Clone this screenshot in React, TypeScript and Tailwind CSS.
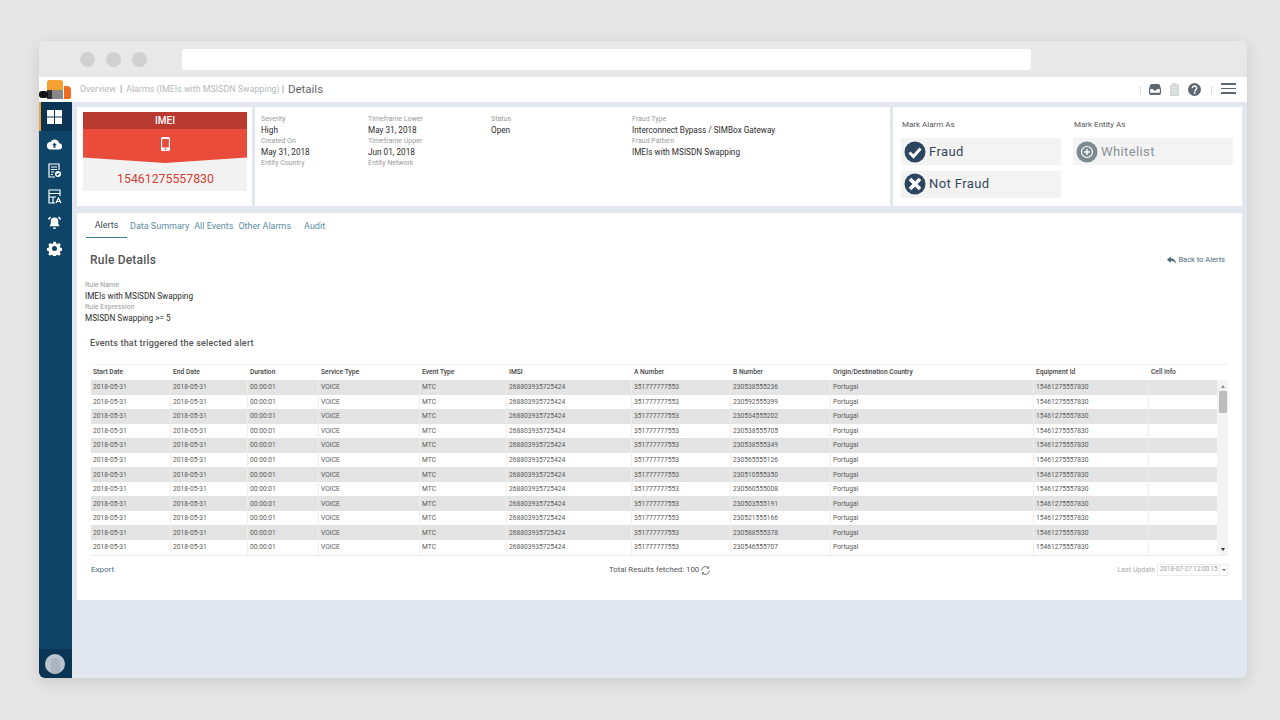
const font = { fontFamily: 'Roboto, "Noto Sans", sans-serif' };

const bNumbers = [
  "230538555236",
  "230592555399",
  "230534555202",
  "230538555705",
  "230538555349",
  "230565555126",
  "230510555350",
  "230560555008",
  "230503555191",
  "230521555166",
  "230588555378",
  "230546555707",
];

const headers = [
  "Start Date",
  "End Date",
  "Duration",
  "Service Type",
  "Event Type",
  "IMSI",
  "A Number",
  "B Number",
  "Origin/Destination Country",
  "Equipment Id",
  "Cell Info",
];

const colWidths = "grid-cols-[80px_77px_71px_101px_87px_125px_99px_100px_203px_115px_69px_11px]";

function Label({ children }: { children: string }) {
  return <div className="text-[7px] leading-[9px] text-[#9a9a9a]">{children}</div>;
}

function Value({ children }: { children: string }) {
  return <div className="text-[8.2px] leading-[12px] text-[#2b2b2b]">{children}</div>;
}

function Field({ label, value }: { label: string; value?: string }) {
  return (
    <div className="h-[22px]">
      <Label>{label}</Label>
      {value && <Value>{value}</Value>}
    </div>
  );
}

function Sidebar() {
  return (
    <div className="flex w-[33px] flex-col rounded-bl-md bg-[#0e4467]">
      <div className="flex h-[29px] items-center justify-center border-l-2 border-[#f2a33a] bg-[#0b3554] pr-[4px] pt-[1px]">
        <svg width="15" height="15" viewBox="0 0 15 15" fill="#fff">
          <rect x="0" y="0" width="7" height="6.5" />
          <rect x="8" y="0" width="7" height="6.5" />
          <rect x="0" y="7.5" width="7" height="6.5" />
          <rect x="8" y="7.5" width="7" height="6.5" />
        </svg>
      </div>
      <div className="flex flex-col items-center gap-[11px] pr-[2px] pt-[6px]">
        <svg width="15" height="15" viewBox="0 0 24 24" fill="#fff">
          <path d="M19.4 10a7.5 7.5 0 0 0-14-2A6 6 0 0 0 6 20h13a5 5 0 0 0 .4-10zM13.5 13v4h-3v-4H8l4-4 4 4z" />
        </svg>
        <svg width="15" height="15" viewBox="0 0 15 15" fill="none" stroke="#fff" strokeWidth="1.2">
          <path d="M8 14H2V1h10v6" />
          <path d="M4 4h6M4 6.5h6M4 9h3M4 11.5h2" />
          <circle cx="11" cy="11" r="3" fill="#fff" stroke="none" />
          <path d="M9.6 11l1 1 1.8-1.8" stroke="#0e4467" />
        </svg>
        <svg width="15" height="15" viewBox="0 0 15 15" fill="none" stroke="#fff" strokeWidth="1.2">
          <path d="M8 14H2V1h11v6" />
          <path d="M2 4.5h11M2 8h7M6 8v6" />
          <path d="M9 14l2.5-5 2.5 5M10 12.5h3" />
        </svg>
        <svg width="15" height="15" viewBox="0 0 24 24" fill="#fff">
          <path d="M12 4a6 6 0 0 0-6 6v4l-2 4h16l-2-4v-4a6 6 0 0 0-6-6zM9.5 20a2.5 2.5 0 0 0 5 0z" />
          <path d="M5 2.5L1.5 6 3 8 6.5 4.5zM19 2.5L22.5 6 21 8 17.5 4.5z" />
        </svg>
        <svg width="15" height="15" viewBox="0 0 24 24" fill="#fff" fillRule="evenodd">
          <path d="M10 1h4l.6 3 2.2.9 2.6-1.7 2.8 2.8-1.7 2.6.9 2.2 3 .6v4l-3 .6-.9 2.2 1.7 2.6-2.8 2.8-2.6-1.7-2.2.9-.6 3h-4l-.6-3-2.2-.9-2.6 1.7-2.8-2.8 1.7-2.6-.9-2.2-3-.6v-4l3-.6.9-2.2L2.2 6l2.8-2.8 2.6 1.7 2.2-.9zM12 8a4 4 0 1 0 0 8 4 4 0 0 0 0-8z" />
        </svg>
      </div>
      <div className="mt-auto flex h-[29px] items-center justify-center rounded-bl-md bg-[#0b3554] pr-[1px]">
        <div className="flex h-5 w-5 items-end justify-center overflow-hidden rounded-full bg-[#b9c5cd]">
          <div className="h-4 w-[9px] rounded-t-full bg-[#a9b6bf]" />
        </div>
      </div>
    </div>
  );
}

function Header() {
  return (
    <div className="flex h-[25px] items-center bg-white pr-[11px]">
      <svg width="33" height="25" viewBox="0 0 33 25" className="shrink-0">
        <rect x="8" y="3" width="16" height="11" rx="2.5" fill="#f5a030" />
        <rect x="8" y="13" width="5" height="9" fill="#333" />
        <rect x="13" y="13" width="11" height="9" fill="#888" />
        <rect x="0" y="14" width="9" height="7" rx="3" fill="#111" />
        <path d="M25 9h3a4 4 0 0 1 4 4v7a2 2 0 0 1-2 2h-5z" fill="#ef6c24" />
      </svg>
      <div className="ml-[8px] flex items-center whitespace-nowrap text-[8.9px] text-[#b4b8bc]">
        <span>Overview</span>
        <span className="mx-[4px] text-[#777]">|</span>
        <span>Alarms (IMEIs with MSISDN Swapping)</span>
        <span className="ml-[2px] mr-[4px] text-[#777]">|</span>
        <span className="text-[11.5px] text-[#666]">Details</span>
      </div>
      <div className="ml-auto flex items-center">
        <div className="mr-[8px] h-[8px] w-px bg-[#ddd]" />
        <svg width="12" height="11" viewBox="0 0 12 11">
          <path d="M3 0h6a2 2 0 0 1 2 1.5L12 5v4a2 2 0 0 1-2 2H2a2 2 0 0 1-2-2V5l1-3.5A2 2 0 0 1 3 0z" fill="#5d6770" />
          <path d="M1.2 5h2.6l1 1.5h2.4l1-1.5h2.6v3.8H1.2z" fill="#fff" />
        </svg>
        <svg width="9" height="13" viewBox="0 0 9 13" className="ml-[9px]">
          <path d="M0 1.5h2.5V0h4v1.5H9V13H0z" fill="#d3d7d7" />
          <path d="M1.5 4.5h6M1.5 6.5h6M1.5 8.5h6M1.5 10.5h6" stroke="#eef0f0" strokeWidth="0.7" />
        </svg>
        <svg width="13" height="13" viewBox="0 0 24 24" className="ml-[9px]">
          <circle cx="12" cy="12" r="12" fill="#5d6770" />
          <path d="M8 9.5a4 4 0 1 1 6.5 3c-1.5 1-2 1.5-2 3" fill="none" stroke="#fff" strokeWidth="2.8" />
          <rect x="10.8" y="17" width="3" height="3" fill="#fff" />
        </svg>
        <div className="ml-[10px] mr-[9px] h-[8px] w-px bg-[#ddd]" />
        <div className="mb-[2px] flex flex-col gap-[3px]">
          <div className="h-[1.5px] w-[15px] bg-[#5d6770]" />
          <div className="h-[1.5px] w-[15px] bg-[#5d6770]" />
          <div className="h-[1.5px] w-[15px] bg-[#5d6770]" />
        </div>
      </div>
    </div>
  );
}

function ImeiCard() {
  return (
    <div className="w-[175px] bg-white pl-[6px] pt-[5px]">
      <div className="relative h-[79px] w-[164px] bg-[#f2f2f2]">
        <div className="flex h-[17px] items-center justify-center bg-[#b93a2f] text-[10px] font-medium text-white">IMEI</div>
        <div
          className="flex h-[34px] items-start justify-center bg-[#e94c3b] pt-[8px]"
          style={{ clipPath: "polygon(0 0, 100% 0, 100% 84%, 50% 100%, 0 84%)" }}
        >
          <svg width="9" height="14" viewBox="0 0 9 14">
            <rect x="0" y="0" width="9" height="14" rx="1.5" fill="#fff" />
            <rect x="1.2" y="2" width="6.6" height="8.5" fill="#e94c3b" />
            <circle cx="4.5" cy="12.2" r="0.9" fill="#e94c3b" />
          </svg>
        </div>
        <div className="pl-[1px] pt-[8px] text-center text-[12.3px] leading-[16px] text-[#d13d32]">15461275557830</div>
      </div>
    </div>
  );
}

function InfoCard() {
  return (
    <div className="grid w-[635px] grid-cols-[107px_123px_141px_1fr] bg-white pl-[6px] pt-[8px]">
      <div>
        <Field label="Severity" value="High" />
        <Field label="Created On" value="May 31, 2018" />
        <Field label="Entity Country" />
      </div>
      <div>
        <Field label="Timeframe Lower" value="May 31, 2018" />
        <Field label="Timeframe Upper" value="Jun 01, 2018" />
        <Field label="Entity Network" />
      </div>
      <div>
        <Field label="Status" value="Open" />
      </div>
      <div>
        <Field label="Fraud Type" value="Interconnect Bypass / SIMBox Gateway" />
        <Field label="Fraud Pattern" value="IMEIs with MSISDN Swapping" />
      </div>
    </div>
  );
}

function MarkButton({ icon, label, muted }: { icon: React.ReactNode; label: string; muted?: boolean }) {
  return (
    <div className="flex h-[27px] w-[160px] items-center gap-[3px] bg-[#f3f3f3] pl-[3px]">
      {icon}
      <span className={`text-[13px] tracking-[0.4px] ${muted ? "text-[#8a9296]" : "text-[#33475b]"}`}>{label}</span>
    </div>
  );
}

function ActionCard() {
  return (
    <div className="flex flex-1 bg-white pl-[8px] pt-[12px]">
      <div className="w-[172px]">
        <div className="mb-[8px] pl-[1px] text-[8px] leading-[11px] text-[#555]">Mark Alarm As</div>
        <div className="flex flex-col gap-[5.5px]">
          <MarkButton
            label="Fraud"
            icon={
              <svg width="22" height="22" viewBox="0 0 22 22">
                <circle cx="11" cy="11" r="10.5" fill="#2c4561" />
                <path d="M5.5 11.5l4 4 7-8" fill="none" stroke="#fff" strokeWidth="3" />
              </svg>
            }
          />
          <MarkButton
            label="Not Fraud"
            icon={
              <svg width="22" height="22" viewBox="0 0 22 22">
                <circle cx="11" cy="11" r="10.5" fill="#2c4561" />
                <path d="M6 6l10 10M16 6L6 16" fill="none" stroke="#fff" strokeWidth="3.6" />
              </svg>
            }
          />
        </div>
      </div>
      <div>
        <div className="mb-[8px] pl-[1px] text-[8px] leading-[11px] text-[#555]">Mark Entity As</div>
        <MarkButton
          label="Whitelist"
          muted
          icon={
            <svg width="22" height="22" viewBox="0 0 22 22">
              <circle cx="11" cy="11" r="10.5" fill="#7d8b8f" />
              <circle cx="11" cy="11" r="5.5" fill="none" stroke="#fff" strokeWidth="1.2" />
              <path d="M11 8v6M8 11h6" stroke="#fff" strokeWidth="1.4" />
            </svg>
          }
        />
      </div>
    </div>
  );
}

function Tabs() {
  return (
    <div className="flex h-[23px] items-center pl-[9px] text-[9px] text-[#5b8ca3]">
      <div className="flex h-[23px] w-[41px] items-center justify-center border-b border-[#3f7d96] text-[#3d4a52]">Alerts</div>
      <span className="ml-[3px]">Data Summary</span>
      <span className="ml-[5px]">All Events</span>
      <span className="ml-[5px]">Other Alarms</span>
      <span className="ml-[13px]">Audit</span>
    </div>
  );
}

function EventsTable() {
  return (
    <div className="relative ml-[14px] mr-[14px] mt-[15px] border-b border-[#ececec] text-[6.7px] text-[#5a5a5a]">
      <div className={`grid h-[16px] ${colWidths} items-center border-t border-[#f2f2f2] font-medium text-[#444]`}>
        {headers.map((h) => (
          <div key={h} className="truncate pl-[2px]">
            {h}
          </div>
        ))}
        <div />
      </div>
      {bNumbers.map((b, i) => (
        <div key={b} className={`grid h-[14.55px] ${colWidths} items-center ${i % 2 === 0 ? "bg-[#e3e3e3]" : "bg-white"}`}>
          {[
            "2018-05-31",
            "2018-05-31",
            "00:00:01",
            "VOICE",
            "MTC",
            "268803935725424",
            "351777777553",
            b,
            "Portugal",
            "15461275557830",
            "",
          ].map((v, j) => (
            <div key={j} className="flex h-full items-center border-r border-[#eeeeee] pl-[2px]">
              {v}
            </div>
          ))}
          <div className="h-full bg-white" />
        </div>
      ))}
      {/* scrollbar */}
      <div className="absolute bottom-0 right-0 top-[16px] flex w-[11px] flex-col items-center bg-[#f3f3f3]">
        <div className="mt-[5px] h-0 w-0 border-x-[2.5px] border-b-[3px] border-x-transparent border-b-[#8a8a8a]" />
        <div className="mt-[3px] h-[22px] w-[8px] bg-[#bdbdbd]" />
        <div className="mb-[4px] mt-auto h-0 w-0 border-x-[2.5px] border-t-[3px] border-x-transparent border-t-[#333]" />
      </div>
    </div>
  );
}

function Footer() {
  return (
    <div className="relative ml-[14px] mr-[14px] mt-[7px] flex h-[15px] items-center">
      <span className="text-[8px] text-[#4c6b7d]">Export</span>
      <div className="absolute left-[518px] flex items-center gap-[1px] text-[7.8px] text-[#555]">
        <span>Total Results fetched: 100</span>
        <svg width="11" height="11" viewBox="0 0 24 24" fill="none" stroke="#555" strokeWidth="1.8">
          <path d="M20.5 12a8.5 8.5 0 0 1-15 5.5M3.5 12a8.5 8.5 0 0 1 15-5.5" />
          <path d="M19 3v4h-4M5 21v-4h4" />
        </svg>
      </div>
      <div className="ml-auto flex items-center gap-[2px]">
        <span className="text-[7px] text-[#aaa]">Last Update</span>
        <div className="flex h-[12px] w-[71px] items-center border border-[#ececec] pl-[2px] text-[6.3px] text-[#999]">
          <span className="flex-1 whitespace-nowrap">2018-07-27 12:00:15</span>
          <span className="flex h-full w-[8px] items-center justify-center border-l border-[#ececec]">
            <span className="h-0 w-0 border-x-[2px] border-t-[2.5px] border-x-transparent border-t-[#666]" />
          </span>
        </div>
      </div>
    </div>
  );
}

export default function App() {
  return (
    <div className="h-[720px] w-[1280px] overflow-hidden bg-[#e5e5e5] pl-[39px] pt-[41px]" style={font}>
      <div className="flex h-[637px] w-[1208px] flex-col overflow-hidden rounded-md shadow-[0_4px_16px_rgba(0,0,0,0.12)]">
        {/* browser bar */}
        <div className="flex h-[36px] shrink-0 items-start bg-[#e8e8e8] pl-[41px] pt-[8px]">
          <div className="flex gap-[11px] pt-[3px]">
            <div className="h-[15px] w-[15px] rounded-full bg-[#d0d0d0]" />
            <div className="h-[15px] w-[15px] rounded-full bg-[#d0d0d0]" />
            <div className="h-[15px] w-[15px] rounded-full bg-[#d0d0d0]" />
          </div>
          <div className="ml-[35px] h-[21px] w-[849px] rounded-[3px] bg-white" />
        </div>
        <Header />
        <div className="flex flex-1 overflow-hidden">
          <Sidebar />
          <div className="flex-1 bg-[#e2e6ee] pl-[5px] pt-[5px]">
            <div className="flex h-[99px] w-[1165px] gap-[3px]">
              <ImeiCard />
              <InfoCard />
              <ActionCard />
            </div>
            <div className="mt-[7px] h-[387px] w-[1165px] bg-white pt-[2px]">
              <Tabs />
              <div className="flex items-center justify-between pl-[13px] pr-[17px] pt-[14px]">
                <span className="text-[12px] font-medium leading-[16px] tracking-[0.2px] text-[#555]">Rule Details</span>
                <span className="flex items-center gap-[2px] text-[7.5px] text-[#4c6b7d]">
                  <svg width="9" height="8" viewBox="0 0 24 20" fill="#4c6b7d">
                    <path d="M10 0L0 9l10 9v-6c6 0 10 2 14 8 0-9-5-14-14-15z" />
                  </svg>
                  Back to Alerts
                </span>
              </div>
              <div className="pl-[8px] pt-[13px]">
                <Field label="Rule Name" value="IMEIs with MSISDN Swapping" />
                <Field label="Rule Expression" value="MSISDN Swapping >= 5" />
              </div>
              <div className="pl-[13px] pt-[12px] text-[9px] font-medium leading-[12px] tracking-[0.2px] text-[#555]">Events that triggered the selected alert</div>
              <EventsTable />
              <Footer />
            </div>
          </div>
        </div>
      </div>
    </div>
  );
}
